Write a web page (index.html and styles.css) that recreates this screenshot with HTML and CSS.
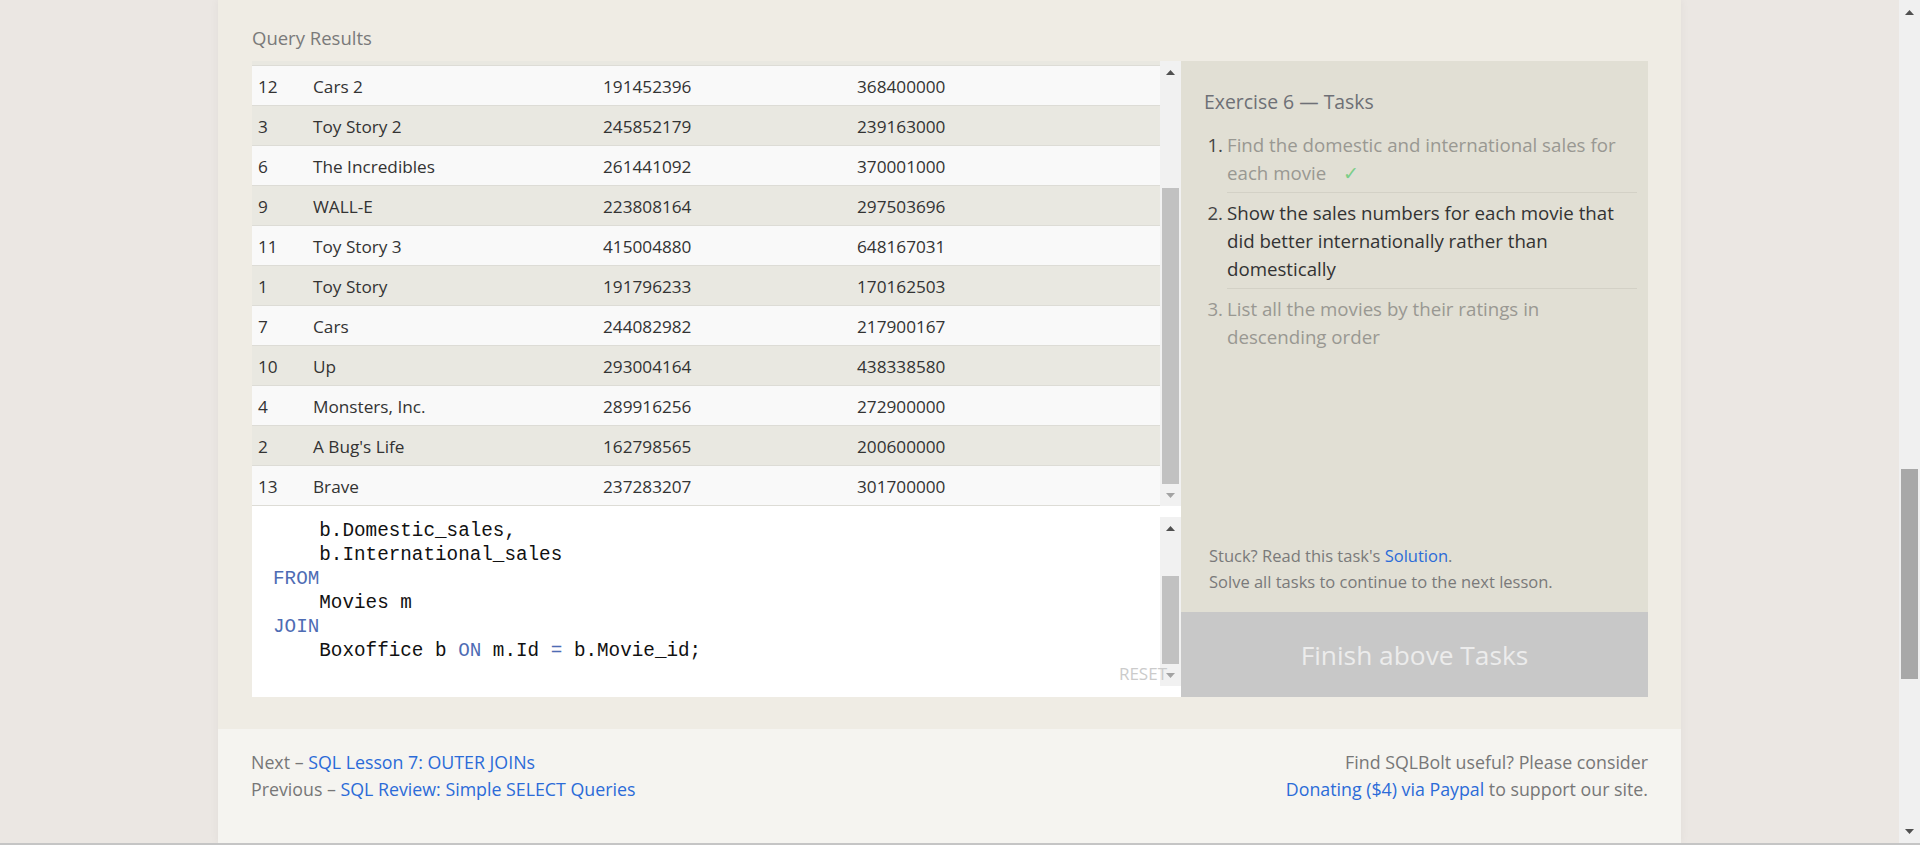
FILE: index.html
```html
<!DOCTYPE html>
<html lang="en">
<head>
<meta charset="utf-8">
<title>SQLBolt - Exercise 6</title>
<link rel="stylesheet" href="styles.css">
</head>
<body>
<div class="screen">
  <div class="page">
    <div class="container">
      <section class="lesson">
        <h3 class="results-title">Query Results</h3>
        <div class="workspace">
          <div class="left">
            <div class="results">
              <div class="table">
                <div class="row row-partial"></div>
                <div class="row odd"><span>12</span><span>Cars 2</span><span>191452396</span><span>368400000</span></div>
                <div class="row even"><span>3</span><span>Toy Story 2</span><span>245852179</span><span>239163000</span></div>
                <div class="row odd"><span>6</span><span>The Incredibles</span><span>261441092</span><span>370001000</span></div>
                <div class="row even"><span>9</span><span>WALL-E</span><span>223808164</span><span>297503696</span></div>
                <div class="row odd"><span>11</span><span>Toy Story 3</span><span>415004880</span><span>648167031</span></div>
                <div class="row even"><span>1</span><span>Toy Story</span><span>191796233</span><span>170162503</span></div>
                <div class="row odd"><span>7</span><span>Cars</span><span>244082982</span><span>217900167</span></div>
                <div class="row even"><span>10</span><span>Up</span><span>293004164</span><span>438338580</span></div>
                <div class="row odd"><span>4</span><span>Monsters, Inc.</span><span>289916256</span><span>272900000</span></div>
                <div class="row even"><span>2</span><span>A Bug's Life</span><span>162798565</span><span>200600000</span></div>
                <div class="row odd"><span>13</span><span>Brave</span><span>237283207</span><span>301700000</span></div>
              </div>
              <div class="sbar sbar-results">
                <div class="sb-btn"><svg width="9" height="5" viewBox="0 0 9 5"><polygon points="0,5 9,5 4.5,0" fill="#505050"/></svg></div>
                <div class="sb-thumb sb-thumb-results"></div>
                <div class="sb-fill"></div>
                <div class="sb-btn"><svg width="9" height="5" viewBox="0 0 9 5"><polygon points="0,0 9,0 4.5,5" fill="#a3a3a3"/></svg></div>
              </div>
            </div>
            <div class="editor">
<pre class="code">    b.Domestic_sales,
    b.International_sales
<span class="kw">FROM</span>
    Movies m
<span class="kw">JOIN</span>
    Boxoffice b <span class="kw">ON</span> m.Id <span class="kw">=</span> b.Movie_id;</pre>
              <div class="sbar sbar-editor">
                <div class="sb-btn"><svg width="9" height="5" viewBox="0 0 9 5"><polygon points="0,5 9,5 4.5,0" fill="#505050"/></svg></div>
                <div class="sb-thumb sb-thumb-editor"></div>
                <div class="sb-fill"></div>
                <div class="sb-btn"><svg width="9" height="5" viewBox="0 0 9 5"><polygon points="0,0 9,0 4.5,5" fill="#a3a3a3"/></svg></div>
              </div>
              <span class="reset">RESET</span>
            </div>
          </div>
          <aside class="tasks">
            <div class="tasks-body">
              <h4 class="tasks-title">Exercise 6 — Tasks</h4>
              <ol class="task-list">
                <li class="task done"><span class="num">1.</span><span class="text">Find the domestic and international sales for each movie <span class="check">✓</span></span></li>
                <li class="task active"><span class="num">2.</span><span class="text">Show the sales numbers for each movie that did better internationally rather than domestically</span></li>
                <li class="task pending"><span class="num">3.</span><span class="text">List all the movies by their ratings in descending order</span></li>
              </ol>
              <div class="stuck">
                <div>Stuck? Read this task's <a href="#" class="link">Solution</a>.</div>
                <div>Solve all tasks to continue to the next lesson.</div>
              </div>
            </div>
            <div class="finish">Finish above Tasks</div>
          </aside>
        </div>
      </section>
      <footer class="footer">
        <div class="footer-left">
          <div>Next – <a href="#" class="link">SQL Lesson 7: OUTER JOINs</a></div>
          <div>Previous – <a href="#" class="link">SQL Review: Simple SELECT Queries</a></div>
        </div>
        <div class="footer-right">
          <div>Find SQLBolt useful? Please consider</div>
          <div><a href="#" class="link">Donating ($4) via Paypal</a> to support our site.</div>
        </div>
      </footer>
    </div>
  </div>
  <div class="win-sbar">
    <div class="sb-btn"><svg width="9" height="5" viewBox="0 0 9 5"><polygon points="0,5 9,5 4.5,0" fill="#505050"/></svg></div>
    <div class="win-thumb"></div>
    <div class="sb-fill"></div>
    <div class="sb-btn"><svg width="9" height="5" viewBox="0 0 9 5"><polygon points="0,0 9,0 4.5,5" fill="#505050"/></svg></div>
  </div>
</div>
<div class="bottom-line"></div>
</body>
</html>
```
FILE: styles.css
```css
* { box-sizing: border-box; }

html, body {
  margin: 0;
  height: 845px;
  overflow: hidden;
}

body {
  background: #ebe7e3;
  font-family: "Open Sans", "Noto Sans", sans-serif;
  color: #333;
}

.screen {
  display: flex;
  height: 843px;
}

.page {
  flex: 1;
  display: flex;
  justify-content: center;
  overflow: hidden;
}

.container {
  width: 1463px;
  background: #efece4;
  display: flex;
  flex-direction: column;
  box-shadow: 0 0 9px rgba(0, 0, 0, 0.05);
}

.lesson {
  padding: 26px 33px 32px 34px;
}

.results-title {
  margin: 0 0 11px;
  font-size: 18.5px;
  line-height: 24px;
  font-weight: normal;
  color: #7a7a7a;
}

.workspace {
  display: flex;
  height: 636px;
}

.left {
  width: 929px;
  display: flex;
  flex-direction: column;
}

.results {
  height: 445px;
  display: flex;
}

.table {
  flex: 1;
  overflow: hidden;
  background: #f9f9f9;
}

.row {
  display: grid;
  grid-template-columns: 55px 290px 254px 1fr;
  height: 40px;
  padding-top: 2px;
  border-bottom: 1px solid #dddcd6;
  font-size: 17.2px;
  line-height: 37px;
  color: #333;
}

.row span {
  padding-left: 6px;
  white-space: nowrap;
}

.row-partial {
  height: 5px;
  padding: 0;
  background: #e9e8e1;
}

.odd { background: #f9f9f9; }
.even { background: #e9e8e1; }

/* fake scrollbars */
.sbar {
  width: 21px;
  background: #f1f1f1;
  display: flex;
  flex-direction: column;
  align-items: stretch;
}

.sb-btn {
  height: 22px;
  display: flex;
  align-items: center;
  justify-content: center;
  flex: none;
}

.sb-btn svg { display: block; }

.sb-fill { flex: 1; }

.sb-thumb {
  margin: 0 2px;
  background: #c1c1c1;
  flex: none;
}

.sb-thumb-results {
  margin-top: 105px;
  height: 296px;
}

.sbar-editor {
  margin-top: 11px;
  height: 169px;
}

.sb-thumb-editor {
  margin-top: 37px;
  height: 88px;
}

.editor {
  flex: 1;
  background: #fff;
  display: flex;
  position: relative;
}

.code {
  flex: 1;
  margin: 0;
  padding: 13px 0 0 21px;
  font-family: "Liberation Mono", "DejaVu Sans Mono", monospace;
  font-size: 19.3px;
  line-height: 24px;
  color: #111;
  white-space: pre;
  overflow: hidden;
}

.kw { color: #4e6cb4; }

.reset {
  position: absolute;
  right: 14px;
  bottom: 12px;
  font-size: 17px;
  line-height: 22px;
  color: #cbcbcb;
}

/* tasks */
.tasks {
  flex: 1;
  background: #e1dfd4;
  display: flex;
  flex-direction: column;
}

.tasks-body {
  flex: 1;
  display: flex;
  flex-direction: column;
  padding: 27px 11px 17px 23px;
}

.tasks-title {
  margin: 0;
  font-size: 19.4px;
  line-height: 28px;
  font-weight: normal;
  color: #6e7076;
}

.task-list {
  list-style: none;
  margin: 15px 0 0;
  padding: 0;
}

.task {
  display: grid;
  grid-template-columns: 23px 1fr;
  font-size: 18.7px;
  line-height: 28px;
}

.task .num {
  text-align: right;
  padding-right: 4px;
  color: #444;
}

.task .text {
  padding-bottom: 5px;
  border-bottom: 1px solid #d3d1c6;
  margin-bottom: 6px;
}

.task:last-child .text {
  border-bottom: none;
}

.done .text, .pending .text, .pending .num { color: #999892; }
.done .num { color: #444; }
.active .text { color: #333; }

.check {
  margin-left: 12px;
  color: #7cce88;
}

.stuck {
  margin-top: auto;
  font-size: 16.5px;
  line-height: 26px;
  color: #7a7a7a;
  padding-left: 5px;
}

.link {
  color: #2b6bd8;
  text-decoration: none;
}

.finish {
  height: 85px;
  background: #c8c8c8;
  color: #ececec;
  font-size: 26.3px;
  display: flex;
  align-items: center;
  justify-content: center;
}

/* footer */
.footer {
  flex: 1;
  background: #f5f4f0;
  display: flex;
  justify-content: space-between;
  padding: 20px 33px 0 33px;
  font-size: 17.8px;
  line-height: 27px;
  color: #777;
}

.footer-right {
  text-align: right;
}

/* window scrollbar */
.win-sbar {
  width: 21px;
  background: #f0f0f0;
  display: flex;
  flex-direction: column;
}

.win-thumb {
  margin: 445px 2px 0 2px;
  height: 210px;
  background: #a8a8a8;
  flex: none;
}

.win-sbar .sb-btn {
  height: 24px;
}

.bottom-line {
  height: 2px;
  background: #c5c5c5;
}
```
